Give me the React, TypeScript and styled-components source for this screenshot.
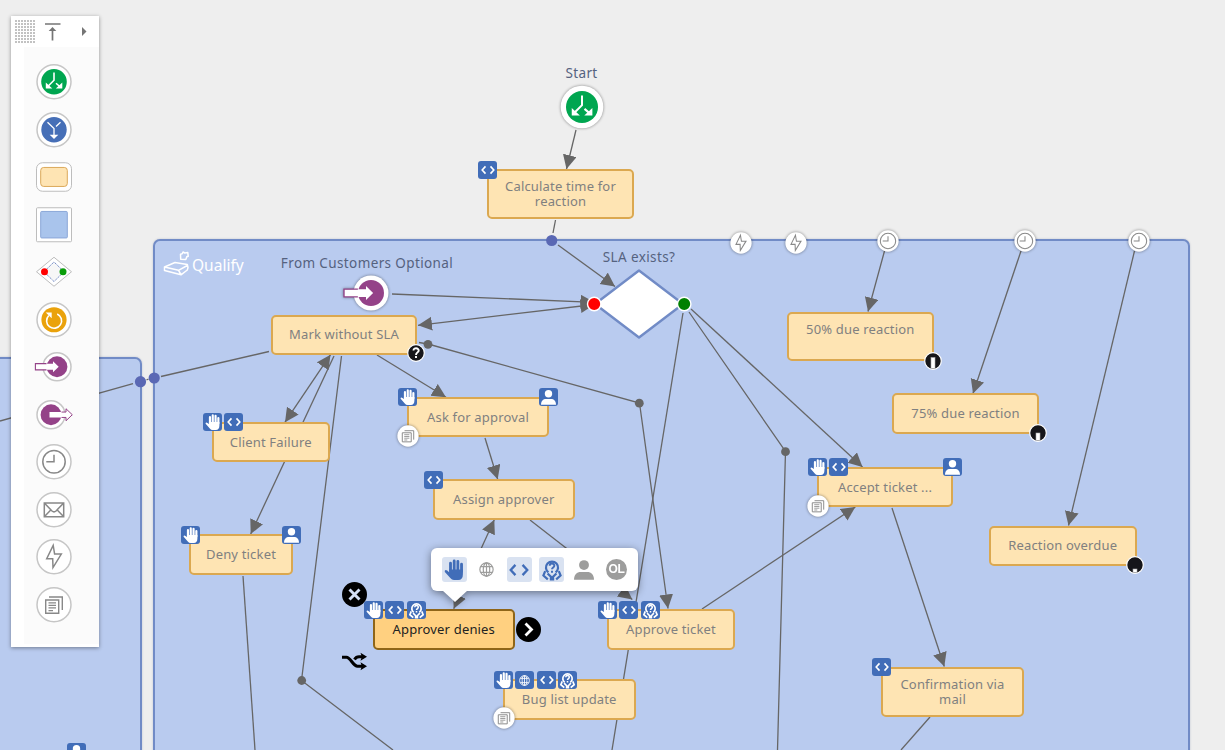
import React from "react";
import styled, { createGlobalStyle } from "styled-components";

const GlobalStyle = createGlobalStyle`
  body {
    margin: 0;
    background: #eeeeee;
    font-family: "Noto Sans", "Open Sans", sans-serif;
  }
`;

const Canvas = styled.main`
  position: relative;
  width: 1225px;
  height: 750px;
  overflow: hidden;
  background: #eeeeee;
`;

const Stage = styled.section<{ $x: number; $y: number; $w: number }>`
  position: absolute;
  box-sizing: border-box;
  left: ${({ $x }) => $x}px;
  top: ${({ $y }) => $y}px;
  width: ${({ $w }) => $w}px;
  height: 600px;
  border: 2px solid #718bc6;
  border-radius: 7px;
  background: #b9cbef;
  box-shadow: 0 0 2px rgba(60, 80, 130, 0.3);
`;

const StageHeader = styled.header`
  display: flex;
  align-items: flex-start;
  gap: 2px;
  padding: 9px 0 0 8px;
`;

const StageTitle = styled.h2`
  margin: 5px 0 0;
  color: #ffffff;
  font-size: 15.5px;
  line-height: 20px;
  font-weight: 400;
`;

const Edges = styled.svg`
  position: absolute;
  left: 0;
  top: 0;
  fill: none;
  stroke: #666666;
  stroke-width: 1.3;
`;

const Task = styled.div<{
  $x: number;
  $y: number;
  $w: number;
  $h: number;
  $selected?: boolean;
  $top?: boolean;
  $low?: boolean;
}>`
  position: absolute;
  box-sizing: border-box;
  left: ${({ $x }) => $x}px;
  top: ${({ $y }) => $y}px;
  width: ${({ $w }) => $w}px;
  height: ${({ $h }) => $h}px;
  display: flex;
  align-items: ${({ $top }) => ($top ? "flex-start" : "center")};
  justify-content: center;
  padding: ${({ $top, $low }) => ($top ? "8px 12px 0" : $low ? "1px 12px 0" : "0 12px 1px")};
  border: 2px solid ${({ $selected }) => ($selected ? "#8f6518" : "#dba850")};
  border-radius: 5px;
  background: ${({ $selected }) => ($selected ? "#ffd080" : "#fee4b3")};
  color: ${({ $selected }) => ($selected ? "#222222" : "#808080")};
  font-size: 13px;
  line-height: 15px;
  letter-spacing: 0.17px;
  text-align: center;
`;

const NodeLabel = styled.div<{ $x: number; $y: number }>`
  position: absolute;
  left: ${({ $x }) => $x}px;
  top: ${({ $y }) => $y}px;
  transform: translate(-50%, -50%);
  color: #55627f;
  font-size: 13.5px;
  line-height: 18px;
  letter-spacing: 0.38px;
  white-space: nowrap;
`;

const Badge = styled.span<{ $x: number; $y: number }>`
  position: absolute;
  left: ${({ $x }) => Math.floor($x - 9.5)}px;
  top: ${({ $y }) => Math.floor($y - 9)}px;
  display: flex;
  align-items: center;
  justify-content: center;
  width: 19px;
  height: 18px;
  border-radius: 3px;
  background: #416db8;
  color: #ffffff;
`;

const Pin = styled.svg<{ $x: number; $y: number; $size: number }>`
  position: absolute;
  left: ${({ $x, $size }) => $x - $size / 2}px;
  top: ${({ $y, $size }) => $y - $size / 2}px;
  width: ${({ $size }) => $size}px;
  height: ${({ $size }) => $size}px;
  overflow: visible;
`;

const ShadowPin = styled(Pin)`
  filter: drop-shadow(0 0 1.5px rgba(0, 0, 0, 0.45));
`;

const Palette = styled.aside`
  position: absolute;
  left: 11px;
  top: 16px;
  width: 88px;
  height: 631px;
  display: flex;
  flex-direction: column;
  background: #ffffff;
  box-shadow: 0 1px 4px rgba(0, 0, 0, 0.4);
`;

const PaletteHeader = styled.div`
  display: flex;
  align-items: flex-start;
  height: 31px;
  flex: none;
`;

const Grip = styled.div`
  width: 21px;
  height: 24px;
  margin: 3px 0 0 3px;
  background-image: linear-gradient(#fff 1px, transparent 1px),
    linear-gradient(90deg, #fff 1px, transparent 1px);
  background-size: 3px 3px;
  background-color: #c2c2c2;
`;

const PaletteBody = styled.div`
  display: flex;
  flex-direction: column;
  flex: 1;
  margin: 0 0 3px 13px;
  padding-top: 11.25px;
  background: #fbfbfb;
`;

const PaletteItem = styled.svg`
  width: 48px;
  height: 47.5px;
  margin-left: 6px;
  flex: none;
  overflow: visible;
`;

const Popover = styled.div`
  position: absolute;
  left: 431px;
  top: 548px;
  width: 207px;
  height: 43px;
  box-sizing: border-box;
  display: flex;
  align-items: center;
  gap: 7.4px;
  padding-left: 11px;
  border-radius: 6px;
  background: #ffffff;
  filter: drop-shadow(0 2px 4px rgba(0, 0, 0, 0.45));

  &::after {
    content: "";
    position: absolute;
    left: 11px;
    top: 42px;
    border: 13px solid transparent;
    border-top: 12px solid #ffffff;
    border-bottom: 0;
  }
`;

const PopoverButton = styled.button<{ $active?: boolean }>`
  display: flex;
  align-items: center;
  justify-content: center;
  width: 25px;
  height: 25px;
  padding: 0;
  border: 0;
  border-radius: 3px;
  background: ${({ $active }) => ($active ? "#d9e2f1" : "transparent")};
  color: ${({ $active }) => ($active ? "#416db8" : "#9d9d9c")};
`;

const Initials = styled.span`
  width: 21px;
  height: 21px;
  border-radius: 50%;
  background: #9d9d9c;
  color: #ffffff;
  font: 700 12px/21px "Liberation Sans", sans-serif;
  letter-spacing: -0.3px;
`;

const HandIcon = ({ size = 16 }) => (
  <svg width={size} height={size} viewBox="0 0 20 20" fill="currentColor">
    <path
      d="M6.200 4V11M9.700 1.800V11M13.200 2.200V11M16.700 5V12"
      stroke="currentColor"
      strokeWidth="2.700"
      strokeLinecap="round"
    />
    <path d="M4.900 10H18V14.500Q18 20 13.500 20H9.500Q7.500 20 6 18L.8 12.300Q.3 11 1.500 10.500 2.700 10.300 4.900 12.600Z" />
  </svg>
);

const CodeIcon = ({ size = 14 }) => (
  <svg width={size} height={size} viewBox="0 0 14 14" fill="none" stroke="currentColor" strokeWidth="1.600">
    <path d="M4.500 3.400 1.200 7 4.500 10.600M9.500 3.400 12.800 7 9.500 10.600" />
  </svg>
);

const GlobeIcon = ({ size = 11 }) => (
  <svg width={size} height={size} viewBox="0 0 14 14" fill="none" stroke="currentColor" strokeWidth="1.100">
    <circle cx="7" cy="7" r="6.200" />
    <ellipse cx="7" cy="7" rx="3" ry="6.200" />
    <path d="M7 .8v12.400M1.600 4.300h10.800M1.600 9.700h10.800" />
  </svg>
);

const AssistIcon = ({ size = 16 }) => (
  <svg width={size} height={size} viewBox="0 0 20 20" fill="none" stroke="currentColor" strokeWidth="2">
    <path d="M6.700 12.200A5.500 5.500 0 1 1 13.300 12.200" />
    <path d="M7.900 6.100c.2-2.700 4.300-2.500 4.200 0 0 1.600-2.100 1.700-2.100 3.300M10 10.700v1.700" strokeWidth="1.800" />
    <path d="M3.800 11 2.200 15l4 3.500M6 13.200l3 3V19.500M16.200 11l1.600 4-4 3.500M14 13.200l-3 3V19.500" />
  </svg>
);

const UserIcon = ({ size = 15 }) => (
  <svg width={size} height={size} viewBox="0 0 15 15" fill="currentColor">
    <circle cx="7.500" cy="3.800" r="3.700" />
    <path d="M0 14.800C0 11 2.200 9 5 9h5c2.800 0 5 2 5 5.800z" />
  </svg>
);

const badgeIcons = {
  hand: <HandIcon />,
  code: <CodeIcon />,
  globe: <GlobeIcon />,
  assist: <AssistIcon size={17} />,
  user: <UserIcon />,
};

type BadgeKind = keyof typeof badgeIcons;

// Glyphs are drawn around the origin, in palette units

const Ring = ({ cx = 0, r = 17 }) => (
  <circle cx={cx} r={r} fill="#fff" stroke="#c6c6c6" strokeWidth="1.500" />
);

const SplitGlyph = () => (
  <>
    <circle r="12.800" fill="#00a650" />
    <path d="M0-9.300V-1.500L-5.500 4M2 1.500 5.500 4.500" fill="none" stroke="#fff" strokeWidth="1.600" />
    <path d="M-8.200.700V6.800H-1.700ZM8.300.700V6.800H1.800Z" fill="#fff" />
  </>
);

const MergeGlyph = () => (
  <>
    <circle r="12.700" fill="#466fb7" />
    <path d="M-6.500-7.500 0-1.200V6M6.500-7.500 2-3.200" fill="none" stroke="#fff" strokeWidth="1.300" />
    <path d="M-4.300 5H4.300L0 9.300Z" fill="#fff" />
  </>
);

const EntryGlyph = () => (
  <>
    <circle cx="3" r="10.400" fill="#944288" />
    <path d="M-18.600-3.100H-1V-5.600L4.700 0-1 5.600V3.100H-18.600Z" fill="#fff" />
    <path d="M-7.500-3.100H-18.600V3.100H-7.500" fill="none" stroke="#944288" strokeWidth="1.100" />
  </>
);

const ExitGlyph = () => (
  <>
    <circle cx="-3" r="10.400" fill="#944288" />
    <path d="M-4.500-2.700H12V-6L18.300 0 12 6V2.700H-4.500Z" fill="#fff" />
    <path d="M7.500-2.700H12V-6L18.300 0 12 6V2.700H7.500" fill="none" stroke="#944288" />
  </>
);

const ClockGlyph = () => (
  <g fill="none" stroke="#888" strokeWidth="1.500">
    <circle r="11.200" />
    <path d="M0-7V0H-7.700" />
  </g>
);

const BoltGlyph = () => (
  <path
    d="M-.800-11.300-7.300 2H-1.300L-1 10.800 7.300-2.700H.600Z"
    fill="none"
    stroke="#888"
    strokeWidth="1.500"
  />
);

const DocGlyph = () => (
  <g fill="none" stroke="#888" strokeWidth="1.400">
    <path d="M-8.300-4.700H4.700V8.500H-8.300ZM-5-7.700H8.300V5.300" />
    <path d="M-5.500-1.900H2M-5.500.700H2M-5.500 3.200H2M-5.500 5.800H-1" strokeWidth="1.200" />
  </g>
);

const MailGlyph = () => (
  <path
    d="M-9.700-6.700H9.700V7H-9.700ZM-9.700-6.700-2 1.200Q0 3 2 1.200L9.700-6.700M-9.700 7-3.500.500M9.700 7 3.500.500"
    fill="none"
    stroke="#888"
    strokeWidth="1.500"
  />
);

const paletteItems = [
  <><Ring /><SplitGlyph /></>,
  <><Ring /><MergeGlyph /></>,
  <>
    <rect x="-17.500" y="-14" width="35" height="28.500" rx="6" fill="#fff" stroke="#bdbdbd" />
    <rect x="-13.300" y="-9.300" width="26.600" height="19" rx="3" fill="#fee4b3" stroke="#dba85a" />
  </>,
  <>
    <rect x="-17.500" y="-17" width="35" height="34" rx="1" fill="#fff" stroke="#bdbdbd" />
    <rect x="-13.300" y="-13.300" width="26.600" height="26.500" rx="1" fill="#a9c4ec" stroke="#8ba7d8" />
  </>,
  <>
    <path d="M-17.500 0 0-14.500 17.500 0 0 14.500Z" fill="#fff" stroke="#bdbdbd" />
    <path d="M-10 0 0-9.800 10 0 0 9.800Z" fill="#f7f7f7" stroke="#7189c5" strokeDasharray="1.500 .7" />
    <circle cx="-9.500" r="3.500" fill="#f00" />
    <circle cx="9" r="3.500" fill="#0a9d0a" />
  </>,
  <>
    <Ring />
    <circle r="12.600" fill="#eaa20b" />
    <path d="M3.200-5.800A7.500 7.500 0 1 1-5.200-4.300" fill="none" stroke="#fff" strokeWidth="1.600" />
    <path d="M-8.300-7.200H-2.300V-1.400Z" fill="#fff" />
  </>,
  <><Ring cx={3} r={14} /><EntryGlyph /></>,
  <><Ring cx={-3} r={14} /><ExitGlyph /></>,
  <><Ring /><ClockGlyph /></>,
  <><Ring /><MailGlyph /></>,
  <><Ring /><BoltGlyph /></>,
  <><Ring /><DocGlyph /></>,
];

const tasks = [
  { text: "Calculate time for reaction", x: 487, y: 169, w: 147, h: 50 },
  { text: "Mark without SLA", x: 271, y: 315, w: 146, h: 39.5 },
  { text: "Client Failure", x: 212, y: 422, w: 117.5, h: 40, low: true },
  { text: "Deny ticket", x: 189, y: 534, w: 104, h: 41 },
  { text: "Ask for approval", x: 407, y: 397, w: 142, h: 40, low: true },
  { text: "Assign approver", x: 433, y: 479, w: 141.5, h: 41 },
  { text: "Approver denies", x: 373, y: 609, w: 141.5, h: 41, selected: true },
  { text: "Approve ticket", x: 607, y: 609, w: 128, h: 41 },
  { text: "Bug list update", x: 503, y: 679, w: 132.5, h: 41 },
  { text: "Accept ticket ...", x: 817, y: 467, w: 136, h: 40, low: true },
  { text: "Confirmation via mail", x: 881, y: 667, w: 143, h: 50 },
  { text: "50% due reaction", x: 787, y: 312, w: 146.5, h: 49, top: true },
  { text: "75% due reaction", x: 892, y: 393, w: 147, h: 41 },
  { text: "Reaction overdue", x: 989, y: 526, w: 147.5, h: 40 },
];

const badges: [BadgeKind, number, number][] = [
  ["code", 487.5, 170],
  ["hand", 212.5, 422.5],
  ["code", 233.5, 422.5],
  ["hand", 190.5, 535],
  ["user", 292, 535],
  ["hand", 407.5, 397.5],
  ["user", 548.5, 397.5],
  ["code", 433.5, 480],
  ["hand", 373.5, 610],
  ["code", 395, 610],
  ["assist", 416.5, 610],
  ["hand", 607.5, 610],
  ["code", 628.5, 610],
  ["assist", 650.5, 610],
  ["hand", 503.5, 680],
  ["globe", 525, 680],
  ["code", 546.5, 680],
  ["assist", 567.5, 680],
  ["hand", 817.5, 467.5],
  ["code", 838.5, 467.5],
  ["user", 952.5, 467.5],
  ["code", 881.5, 667.5],
  ["user", 76.5, 752],
];

const arrows = [
  "M576 130 566.500 169",
  "M558 245 615 286.500",
  "M392 294 594.500 302.300",
  "M377 355 446 397.200",
  "M428 344 639.500 403 668 608.500",
  "M334 356 250.700 534",
  "M485 438 497.700 479.300",
  "M530 520 632.300 599.500",
  "M691 309 862.500 467",
  "M702 609 855.300 507",
  "M892 508 944.300 666.500",
  "M884.500 251 868 311.500",
  "M1021 251 973 393.500",
  "M1134.500 251 1068.500 525.500",
];

const doubleArrows = [
  "M418 325.300 594.500 304.500",
  "M285 422.200 330.500 354.700",
  "M453.700 608.700 494.300 519.700",
];

const lines = [
  "M555.500 220 553 233",
  "M269 351.500 161 376.500",
  "M148.500 379 146.500 380",
  "M133 383.700 0 421",
  "M341.500 356 301.500 680.500 393 750",
  "M419 342.500 428 344",
  "M683 313 612 750",
  "M689 312 785.500 451.500 777.500 750",
  "M930 717 901 750",
  "M243 576 255 750",
];

const joints = [[428, 344.3], [639.3, 403.2], [301.7, 680.5], [785.5, 451.7]];
const ports = [[551.7, 240.5], [154.2, 378], [140.5, 381.7]];
const timers = [[888.3, 240.5], [1025.3, 240.5], [1139.3, 240.5]];
const signals = [[741.3, 243.3], [796.3, 243.3]];
const docs = [[408.3, 436.3], [818.3, 506.3], [504.3, 718.3]];
const gauges = [[933, 361, 11], [1038, 433, 7.5], [1135.3, 565, 3.5]];

export default function App() {
  return (
    <>
      <GlobalStyle />
      <Canvas>
        <Stage $x={-300} $y={357} $w={442} />
        <Stage $x={153} $y={239} $w={1037}>
          <StageHeader>
            <svg width="27" height="27" viewBox="0 0 27 27" fill="none" stroke="#fff" strokeWidth="1.500" strokeLinejoin="round">
              <path d="M17.500 4.200 19.200 3.800 20 2 21.800 3 24.800 2.600 25.200 6.200 23.800 6.800 22.800 9.600 17.700 9.200Z" />
              <path d="M1.500 17 12 12.500 24.300 14.500 25 17.500 24.300 20 18 24.800 1.500 20.600ZM1.500 17 15.500 20.300 18 24.500M15.500 20.300 24.300 15.500" />
            </svg>
            <StageTitle>Qualify</StageTitle>
          </StageHeader>
        </Stage>

        <Edges width="1225" height="750">
          <defs>
            <marker
              id="arrow"
              markerUnits="userSpaceOnUse"
              markerWidth="15"
              markerHeight="15"
              refX="14"
              refY="7"
              orient="auto-start-reverse"
            >
              <path d="M0 0 14 7 0 14Z" fill="#666" stroke="none" />
            </marker>
          </defs>
          {lines.map((d) => <path key={d} d={d} />)}
          {arrows.map((d) => <path key={d} d={d} markerEnd="url(#arrow)" />)}
          {doubleArrows.map((d) => (
            <path key={d} d={d} markerStart="url(#arrow)" markerEnd="url(#arrow)" />
          ))}
          {joints.map(([x, y]) => (
            <circle key={x} cx={x} cy={y} r="4.400" fill="#666" stroke="none" />
          ))}
          {ports.map(([x, y]) => (
            <circle key={x} cx={x} cy={y} r="5.600" fill="#5a68b4" stroke="none" />
          ))}
          <path
            d="M639 270.500 683 304 639 337.500 595 304Z"
            fill="#fff"
            stroke="#718bc6"
            strokeWidth="2.400"
            strokeLinejoin="round"
          />
          <circle cx="594.200" cy="304" r="6.700" fill="#f00" stroke="#fff" strokeWidth="1.400" />
          <circle cx="684.200" cy="304" r="6.700" fill="#008000" stroke="#fff" strokeWidth="1.400" />
        </Edges>

        <NodeLabel $x={581.5} $y={73}>Start</NodeLabel>
        <NodeLabel $x={367} $y={263}>From Customers Optional</NodeLabel>
        <NodeLabel $x={639} $y={257}>SLA exists?</NodeLabel>

        <ShadowPin $x={582} $y={107} $size={44} viewBox="-22 -22 44 44">
          <circle r="21.300" fill="#fff" />
          <g transform="scale(1.250)"><SplitGlyph /></g>
        </ShadowPin>
        <ShadowPin $x={371} $y={293} $size={36} viewBox="-18 -18 36 36">
          <circle r="17.500" fill="#fff" />
          <g transform="scale(1.250) translate(-3 0)"><EntryGlyph /></g>
        </ShadowPin>

        {tasks.map((t) => (
          <Task
            key={t.text}
            $x={t.x}
            $y={t.y}
            $w={t.w}
            $h={t.h}
            $selected={t.selected}
            $top={t.top}
            $low={t.low}
          >
            {t.text}
          </Task>
        ))}

        {timers.map(([x, y]) => (
          <ShadowPin key={x} $x={x} $y={y} $size={22} viewBox="-16 -16 32 32">
            <circle r="15.500" fill="#fff" /><ClockGlyph />
          </ShadowPin>
        ))}
        {signals.map(([x, y]) => (
          <ShadowPin key={x} $x={x} $y={y} $size={22} viewBox="-16 -16 32 32">
            <circle r="15.500" fill="#fff" /><BoltGlyph />
          </ShadowPin>
        ))}
        {docs.map(([x, y]) => (
          <ShadowPin key={x} $x={x} $y={y} $size={22} viewBox="-16 -16 32 32">
            <circle r="15.500" fill="#fff" /><DocGlyph />
          </ShadowPin>
        ))}
        {gauges.map(([x, y, level]) => (
          <Pin key={x} $x={x} $y={y} $size={18} viewBox="-9 -9 18 18">
            <circle r="8.300" fill="#16161a" stroke="#fff" strokeWidth="1.200" />
            <rect x="-2" y={7.5 - level} width="4" height={level} fill="#fff" stroke="#aaa" strokeWidth=".6" />
          </Pin>
        ))}
        <Pin $x={416.3} $y={353} $size={18} viewBox="-9 -9 18 18">
          <circle r="8.300" fill="#16161a" stroke="#fff" strokeWidth="1.200" />
          <path d="M-2.500-2.600C-2.500-5.500 2.800-5.400 2.700-2.400 2.600-.600 0-.500 0 1.900M0 3.100V5" fill="none" stroke="#fff" strokeWidth="1.900" />
        </Pin>

        {badges.map(([kind, x, y]) => (
          <Badge key={`${x}-${y}`} $x={x} $y={y}>{badgeIcons[kind]}</Badge>
        ))}

        <Popover>
          <PopoverButton $active><HandIcon size={21} /></PopoverButton>
          <PopoverButton><GlobeIcon size={15} /></PopoverButton>
          <PopoverButton $active><CodeIcon size={20} /></PopoverButton>
          <PopoverButton $active><AssistIcon size={22} /></PopoverButton>
          <PopoverButton><UserIcon size={20} /></PopoverButton>
          <PopoverButton><Initials>OL</Initials></PopoverButton>
        </Popover>

        <Pin $x={354.5} $y={594.5} $size={25} viewBox="-12.500 -12.500 25 25">
          <circle r="12.500" />
          <path d="M-5-5 5 5M5-5-5 5" stroke="#d5e0f6" strokeWidth="2.900" />
        </Pin>
        <Pin $x={528.5} $y={629.5} $size={25} viewBox="-12.500 -12.500 25 25">
          <circle r="12.500" />
          <path d="M-3-6 3 0-3 6" fill="none" stroke="#fff" strokeWidth="2.800" />
        </Pin>
        <Pin $x={354.5} $y={661.5} $size={25} viewBox="-12.500 -12.500 25 25">
          <path d="M-12.500-4.300H-8C-4-4.300-1.500 4.700 3 4.700H9M0-2C1.200-4 2.500-4.700 4.500-4.700H9" fill="none" stroke="#000" strokeWidth="3" />
          <path d="M6-8.700 12.500-4.700 6-.700 7.300-4.700ZM6 .7 12.500 4.700 6 8.700 7.300 4.700Z" />
        </Pin>

        <Palette>
          <PaletteHeader>
            <Grip />
            <svg width="64" height="31" viewBox="0 0 64 31">
              <path d="M10 8H25.500M17.500 24.500V13" stroke="#757575" strokeWidth="1.700" />
              <path d="M13.700 15 17.500 11 21.300 15Z" fill="#757575" />
              <path d="M47 11 51.500 15.500 47 20Z" fill="#757575" />
            </svg>
          </PaletteHeader>
          <PaletteBody>
            {paletteItems.map((glyph, i) => (
              <PaletteItem key={i} viewBox="-24 -23.750 48 47.500">{glyph}</PaletteItem>
            ))}
          </PaletteBody>
        </Palette>
      </Canvas>
    </>
  );
}
